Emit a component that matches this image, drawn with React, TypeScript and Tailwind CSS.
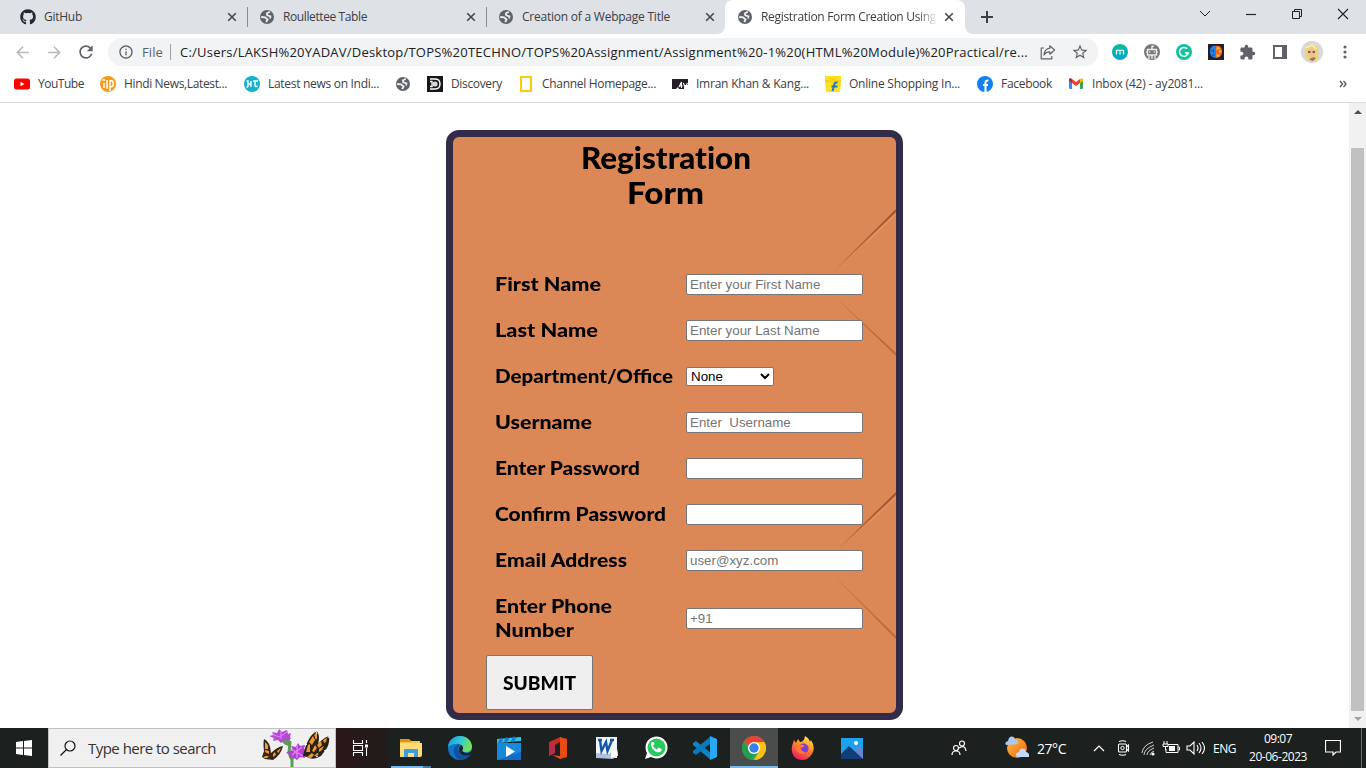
import { useLayoutEffect, useRef, useState } from "react";
import type { ReactNode } from "react";
import { FaGithub } from "react-icons/fa";
import { MdRefresh, MdStarBorder, MdInfoOutline, MdArrowBack, MdArrowForward, MdExtension } from "react-icons/md";

/* Single line of text that spans exactly w pixels, by tracking or by stretching its glyphs. */
function Fit({ w, className = "", stretch = false, children }: { w: number; className?: string; stretch?: boolean; children: string }) {
  const ref = useRef<HTMLSpanElement>(null);
  const [natural, setNatural] = useState(0);
  useLayoutEffect(() => {
    setNatural(ref.current!.offsetWidth === 0 ? w : ref.current!.getBoundingClientRect().width);
  }, [w, children]);
  const style = natural === 0
    ? {}
    : stretch
      ? { transform: `scaleX(${w / natural})` }
      : { letterSpacing: (w - natural) / children.length };
  return (
    <span className="block shrink-0 text-left" style={{ width: w }}>
      <span ref={ref} className={`inline-block origin-left whitespace-pre ${className}`} style={style}>
        {children}
      </span>
    </span>
  );
}

function Globe() {
  return (
    <svg viewBox="0 0 16 16" className="size-4 shrink-0">
      <circle cx="8" cy="8" r="7" fill="#5f6368" />
      <path d="M10.800 2.800 7.800 4.400l.4 2 3.300 1-.4 2.100" fill="none" stroke="#eceef1" strokeWidth="1.700" />
      <path d="m2.200 8 3.800.3 2.600 2.100-1.400 2.800" fill="none" stroke="#eceef1" strokeWidth="1.900" />
    </svg>
  );
}

function Close() {
  return (
    <svg viewBox="0 0 10 10" className="size-[10px] shrink-0">
      <path d="m1.200 1.200 7.600 7.600M8.800 1.200 1.200 8.800" stroke="#45494d" strokeWidth="1.600" />
    </svg>
  );
}

function Tab({ icon, label, w }: { icon: ReactNode; label: string; w: number }) {
  return (
    <div className="flex h-[34px] w-[239px] shrink-0 items-center">
      {icon}
      <div className="ml-2 flex-1">
        <Fit w={w}>{label}</Fit>
      </div>
      <Close />
      <div className="mr-[11px] ml-[10px] h-5 w-px bg-[#898c91]" />
    </div>
  );
}

function Mark({ icon, label, w }: { icon: ReactNode; label?: string; w?: number }) {
  return (
    <div className="mr-4 flex shrink-0 items-center gap-2">
      {icon}
      {label && w && <Fit w={w}>{label}</Fit>}
    </div>
  );
}

const small = "size-4 shrink-0";

function Browser() {
  return (
    <header className="text-[12px] text-[#3c4043]">
      <div className="flex h-[34px] bg-[#dee1e6] pl-5">
        <Tab icon={<FaGithub className="size-4 text-[#24292f]" />} label="GitHub" w={38} />
        <Tab icon={<Globe />} label="Roullettee Table" w={84} />
        <div className="flex h-[34px] w-[217px] shrink-0 items-center">
          <Globe />
          <div className="ml-2 flex-1"><Fit w={148}>Creation of a Webpage Title</Fit></div>
          <Close />
        </div>
        <div className="flex h-[34px] w-[10px] shrink-0 items-end">
          <svg viewBox="0 0 8 8" className="ml-[2px] size-2"><path d="M8 0v8H0a8 8 0 0 0 8-8Z" fill="white" /></svg>
        </div>
        <div className="flex h-[34px] w-[240px] shrink-0 items-center rounded-t-lg bg-white pl-3">
          <Globe />
          <div className="ml-2 w-[175px] overflow-hidden [mask-image:linear-gradient(to_right,black_156px,transparent_177px)]">
            <Fit w={175}>Registration Form Creation Using</Fit>
          </div>
          <div className="ml-2"><Close /></div>
        </div>
        <div className="flex h-[34px] items-end">
          <svg viewBox="0 0 8 8" className="size-2"><path d="M0 0v8h8a8 8 0 0 1-8-8Z" fill="white" /></svg>
        </div>
        <svg viewBox="0 0 14 14" className="mt-[10px] ml-[7px] size-[14px]"><path d="M7 1v12M1 7h12" stroke="#3c4043" strokeWidth="2" /></svg>
        <div className="flex flex-1 items-start justify-end pt-2 pr-[17px]">
          <svg viewBox="0 0 150 14" className="h-[14px] w-[150px] text-[#202124]" fill="none" stroke="currentColor">
            <path d="m1 3 5 5 5-5" />
            <path d="M47 6.500h10" strokeWidth="1.200" />
            <path d="M93.500 3.500h7v7h-7zM95.500 3.500v-2h7v7h-2" />
            <path d="m139 1 10 10M149 1l-10 10" strokeWidth="1.100" />
          </svg>
        </div>
      </div>

      <div className="flex h-8 items-center bg-white pt-1 pl-[13px] text-[14px]">
        <MdArrowBack className="size-[19px] text-[#b7b9bb]" />
        <MdArrowForward className="ml-[13px] size-[19px] text-[#b7b9bb]" />
        <MdRefresh className="ml-[12px] size-5 text-[#5f6368]" />
        <div className="ml-[12px] flex h-7 w-[990px] shrink-0 items-center rounded-full bg-[#f1f3f4] pl-[10px]">
          <MdInfoOutline className="size-4 text-[#5f6368]" />
          <div className="ml-2 text-[#5f6368]"><Fit w={21} className="text-[13px]">File</Fit></div>
          <div className="mr-[9px] ml-[7px] h-4 w-px bg-[#9aa0a6]" />
          <Fit w={848} className="text-[13px] text-[#202124]">C:/Users/LAKSH%20YADAV/Desktop/TOPS%20TECHNO/TOPS%20Assignment/Assignment%20-1%20(HTML%20Module)%20Practical/re...</Fit>
          <svg viewBox="0 0 16 16" className="ml-3 size-4 shrink-0" fill="none" stroke="#5f6368" strokeWidth="1.200">
            <path d="M4 4H1.200v10.800h10.600V12M9.800 1.800l4.800 4.200-4.800 4.200V7.800C7 7.700 5.200 8.800 4 11c.3-3.400 2-6.400 5.800-6.800Z" strokeLinejoin="round" />
          </svg>
          <MdStarBorder className="ml-[15px] size-[18px] shrink-0 text-[#5f6368]" />
        </div>
        <svg viewBox="0 0 16 16" className="ml-[14px] size-4 shrink-0">
          <defs><linearGradient id="teal" x2="0" y2="1"><stop stopColor="#08bb9c" /><stop offset="1" stopColor="#08a4cf" /></linearGradient></defs>
          <circle cx="8" cy="8" r="8" fill="url(#teal)" />
          <path d="M4.500 10.500V6.500q1.700-1 3.500 0v4M8 6.500q1.800-1 3.500 0v4" fill="none" stroke="white" strokeWidth="1.200" />
        </svg>
        <svg viewBox="0 0 16 16" className="ml-4 size-4 shrink-0">
          <circle cx="8" cy="8" r="8" fill="#767676" />
          <path d="M3.500 5.500h9v5.500h-9Z" fill="none" stroke="#eee" strokeWidth="1.400" />
          <path d="M8 5V2.200h2M8 11v4M5 8h1.500M9.500 8H11M2 8h1M13 8h1M5 12v3M11 12v3" stroke="white" strokeWidth="1.200" fill="none" />
        </svg>
        <svg viewBox="0 0 16 16" className="ml-4 size-4 shrink-0">
          <circle cx="8" cy="8" r="8" fill="#15c39a" />
          <path d="M11 4.700A4.400 4.400 0 1 0 12.200 9H9" fill="none" stroke="white" strokeWidth="1.500" />
          <path d="m12 7.700-.2 3.500-2-1.500Z" fill="white" />
        </svg>
        <svg viewBox="0 0 16 16" className="ml-4 size-4 shrink-0">
          <path d="M0 0h16v16H0z" fill="#24202b" />
          <path d="M8 2C4 1 2 4 2 7.500s2 6 6 6.500Z" fill="#1d84f0" />
          <path d="M8 2c4-1 6 2 6 5.500s-2 6-6 6.500Z" fill="#f0642b" />
          <path d="M8.500 4.500h3M11 7.500h2.500M8.500 11.500h3" stroke="#ffbf1e" strokeWidth="2" />
          <path d="M3.500 6.500h2v2M4 11h2.500" stroke="#1b3470" strokeWidth=".8" fill="none" />
        </svg>
        <MdExtension className="ml-[15px] size-[17px] shrink-0 text-[#5f6368]" />
        <svg viewBox="0 0 14 14" className="ml-[17px] size-[14px] shrink-0"><path d="M1 1h12v12H1z" fill="white" stroke="#5f6368" strokeWidth="2" /><path d="M9 1h4v12H9z" fill="#5f6368" /></svg>
        <svg viewBox="0 0 22 22" className="ml-[14px] size-[22px] shrink-0">
          <circle cx="11" cy="11" r="11" fill="#d8d8d8" />
          <path d="M5 16C3 8 6 3 11 4c6-1 7 5 6 13l-4 3-7-2Z" fill="#f1d36d" />
          <path d="M7 9q4-3 7 0v5l-3 3-3-2Z" fill="#eebf98" />
          <path d="M7 11h2.500M11.500 11H14" stroke="#4b4747" strokeWidth="1.300" />
          <path d="m5 7 6-3 4 4" fill="none" stroke="#fff0a7" strokeWidth="1.500" />
          <path d="M8 19q3-4 7-2l-3 3Z" fill="#aa725c" />
        </svg>
        <svg viewBox="0 0 4 14" className="ml-[20px] h-[14px] w-1 shrink-0" fill="#5f6368"><circle cx="2" cy="2" r="1.600" /><circle cx="2" cy="7" r="1.600" /><circle cx="2" cy="12" r="1.600" /></svg>
      </div>

      <div className="flex h-[37px] items-center border-b border-[#d9dbdd] bg-white pl-[14px]">
        <Mark icon={<svg viewBox="0 0 16 16" className={small}><rect y="2.500" width="16" height="11" rx="2.500" fill="red" /><path d="m6.500 5.700 4 2.300-4 2.300Z" fill="white" /></svg>} label="YouTube" w={46} />
        <Mark icon={<svg viewBox="0 0 16 16" className={small}><circle cx="8" cy="8" r="8" fill="#f59b17" /><path d="M4 7v5M2.500 4H5M7 13V4M10 15V4.700h1.500q1.800 0 1.800 3t-1.800 3H10" stroke="white" strokeWidth="1.500" fill="none" /></svg>} label="Hindi News,Latest..." w={103} />
        <Mark icon={<svg viewBox="0 0 16 16" className="ml-px size-4 shrink-0"><circle cx="8" cy="8" r="8" fill="#13b1ce" /><path d="M2.500 5h1.500v6M7 5v6M4 8h3M9 5h5M11 5v5q1.500 1.500 2.500-.5M2.500 11H4" stroke="white" strokeWidth="1.400" fill="none" /></svg>} label="Latest news on Indi..." w={111} />
        <Mark icon={<Globe />} />
        <Mark icon={<svg viewBox="0 0 16 16" className={small}><path d="M0 0h16v16H0z" fill="#15171a" /><path d="M3 3h5q5 0 5 5t-5 5H3" fill="none" stroke="white" strokeWidth="1.400" /><circle cx="8" cy="8" r="2.600" fill="#d8d8d8" /><path d="M3 5.500h2v5H3" fill="none" stroke="white" strokeWidth="1.300" /></svg>} label="Discovery" w={51} />
        <Mark icon={<svg viewBox="0 0 16 16" className={small}><path d="M3 1h10v14H3z" fill="none" stroke="#fecb0a" strokeWidth="2" /></svg>} label="Channel Homepage..." w={114} />
        <Mark icon={<svg viewBox="0 0 16 16" className={small}><path d="M0 3h16v6h-4v4H7l-1-2-2 2H0Z" fill="#242025" /><path d="m7 11 2.500-5v6M8 10h2.500M11.500 7l1.500 5 2.500-5" stroke="white" strokeWidth="1.100" fill="none" /></svg>} label="Imran Khan & Kang..." w={113} />
        <Mark icon={<svg viewBox="0 0 16 16" className={small}><path d="M0 0h16v5l-1 11H1L0 5Z" fill="#ffe11b" /><path d="M0 5h16M5 2q3 3 6 0" stroke="#f8bd08" fill="none" /><path d="M12.500 6.500H11q-1.500 0-2 3.500l-1.500 5M6.500 10.500h6" fill="none" stroke="#2874c7" strokeWidth="2" /></svg>} label="Online Shopping In..." w={111} />
        <Mark icon={<svg viewBox="0 0 16 16" className="ml-px size-4 shrink-0"><circle cx="8" cy="8" r="8" fill="#1180f4" /><path d="M8.500 16V7q0-3 3-2.500M6 9h5" fill="none" stroke="white" strokeWidth="2.100" /></svg>} label="Facebook" w={51} />
        <Mark icon={<svg viewBox="0 0 16 16" className={small}><path d="M1 3h3v10H2q-1 0-1-1Z" fill="#4285f4" /><path d="M12 3h3v9q0 1-1 1h-2Z" fill="#34a853" /><path d="M1 4q0-3 3-1l4 3 4-3v4l-4 3-4-3Z" fill="#ea4335" /><path d="M1 4q0-3 3-1v4L1 5Z" fill="#b92b32" /><path d="M15 4q0-3-3-1v4l3-2Z" fill="#fbbc04" /></svg>} label="Inbox (42) - ay2081..." w={111} />
        <svg viewBox="0 0 8 8" className="mr-[19px] ml-auto size-2"><path d="m1 1 2.500 3L1 7M4.500 1 7 4 4.500 7" fill="none" stroke="#505458" strokeWidth="1.300" /></svg>
      </div>
    </header>
  );
}

const fieldClass = "block h-[21px] w-[177px] rounded-[2px] border border-[#767676] bg-white px-[3px] py-px font-['Liberation_Sans',sans-serif] text-[13.333px] leading-normal font-normal placeholder:text-[#757575]";

function Row({ label, w, children }: { label: string; w: number; children: ReactNode }) {
  return (
    <div className="flex h-[46px] items-center">
      <div className="w-[191px]"><Fit stretch w={w}>{label}</Fit></div>
      {children}
    </div>
  );
}

function Registration() {
  return (
    <main className="flex h-[625px] bg-white">
      <div className="w-[1349px] pt-[27px] pl-[446px]">
        <form className="relative h-[590px] w-[457px] rounded-[13px] border-[7px] border-[#332c48] bg-[#dc8856] font-['Lato',sans-serif] text-[19px] leading-6 font-black text-black">
          <svg viewBox="0 0 443 576" className="absolute inset-0 h-[576px] w-[443px]">
            <path d="M381 134 443 72v3Z" fill="#a45332" /><path d="m413 106 30-29" stroke="#eba077" strokeWidth=".8" />
            <path d="m381 159 62 60v-3Z" fill="#bd6841" />
            <path d="m384 413 59-58v3Z" fill="#a45332" /><path d="m415 387 28-27" stroke="#eba077" strokeWidth=".8" />
            <path d="m381 439 62 63v-3Z" fill="#bd6841" />
          </svg>
          <div className="relative pl-[42px]">
            <h1 className="flex w-[341px] flex-col items-center pt-[3px] text-[30px] leading-[35px] [font-variant-ligatures:none]">
              <Fit stretch w={170}>Registration</Fit>
              <Fit stretch w={77}>Form</Fit>
            </h1>
            <div className="mt-[51px]">
              <Row label="First Name" w={106}><input className={fieldClass} placeholder="Enter your First Name" /></Row>
              <Row label="Last Name" w={103}><input className={fieldClass} placeholder="Enter your Last Name" /></Row>
              <Row label="Department/Office" w={178}>
                <div className="flex h-[19px] w-[88px] items-center justify-between rounded-[2px] border border-[#767676] bg-white pr-[3px] pl-1 font-['Liberation_Sans',sans-serif] text-[13.333px] font-normal">
                  <span className="pt-px">None</span>
                  <svg viewBox="0 0 10 7" className="h-[7px] w-[10px]"><path d="m1 1 4 4 4-4" fill="none" stroke="black" strokeWidth="2" /></svg>
                </div>
              </Row>
              <Row label="Username" w={97}><input className={fieldClass} placeholder="Enter  Username" /></Row>
              <Row label="Enter Password" w={145}><input className={fieldClass} /></Row>
              <Row label="Confirm Password" w={171}><input className={fieldClass} /></Row>
              <Row label="Email Address" w={132}><input className={fieldClass} placeholder="user@xyz.com" /></Row>
              <div className="flex h-[70px] items-center">
                <div className="w-[191px]"><Fit stretch w={117}>Enter Phone</Fit><Fit stretch w={79}>Number</Fit></div>
                <input className={fieldClass} placeholder="+91" />
              </div>
            </div>
            <button type="button" className="-ml-[9px] mt-[2px] flex h-[55px] w-[107px] items-center justify-center rounded-[2px] border border-[#767676] bg-[#efefef] text-[18px]">
              <Fit stretch w={73}>SUBMIT</Fit>
            </button>
          </div>
        </form>
      </div>
      <div className="flex w-[17px] flex-col items-center bg-[#f1f1f1]">
        <svg viewBox="0 0 8 4" className="mt-[7px] h-1 w-2"><path d="m4 0 4 4H0Z" fill="#505050" /></svg>
        <div className="mt-[34px] h-[563px] w-[13px] bg-[#c1c1c1]" />
        <svg viewBox="0 0 8 4" className="mt-[6px] h-1 w-2"><path d="M0 0h8L4 4Z" fill="#a3a3a3" /></svg>
      </div>
    </main>
  );
}

function Butterflies() {
  return (
    <svg viewBox="0 0 70 38" className="h-[38px] w-[70px]">
      <path d="M31 38V31l-3-7 1-12M31 30l5-6" fill="none" stroke="#5e9b52" strokeWidth="3" />
      <path d="m19 10 10-2v10l-6-3Z" fill="#61975d" />
      <path d="m8 7 5-1-2-3 5 1 2-4 3 3 5-2 1 4 3-1-1 4 1 2-6 1-4 3-3-3-5 1 1-3Z" fill="#b44bd5" />
      <path d="m11 5 7 3 8-5M20 2v8" stroke="#e08af5" fill="none" />
      <path d="m28 22 4-1-2-4 5 1 2-4 2 3 5-1-1 4 3 2-3 3 1 4-5-1-3 3-4-3-4 1 1-4-4-1Z" fill="#b33ed0" />
      <path d="m30 20 12 7M31 26l10-8M36 16v13" stroke="#df87f3" strokeWidth="1.300" />
      <path d="M42 27q2-9 4-13 3-7 7-10 3-3 4 0 2 5 0 11 5-6 11-8 1 6-2 12l-6 8q-8 5-14 1Z" fill="#2b211c" />
      <path d="m45 23 2-7 2-1v8Zm3-10 4-6 2 4-3 5Zm5-7 3-3v6l-1 2ZM51 22l3-6 2 3-3 4Zm5-6 4-4 1 4-3 3Zm6-5 4-2-1 4-2 1Zm-4 9 5-3-2 4-3 2Zm-12 8 5-4 2 2-3 3Zm7-1 3-3 2 1-3 2Z" fill="#f09a24" />
      <path d="m55 3 1 2m11 4 1-2m-5 15 2-1m-10 7 2-1M45 15l1 1" stroke="#fff" strokeWidth="1" />
      <path d="M3 10q6 2 7 14 6-6 12-7-2 9-10 14l-8-1-3-2 2-6q-1-8 0-12Z" fill="#37251b" />
      <path d="m4 13 3 3v4H4Zm0 8 4 1v3l-4-2Zm8 4 2-2 1 3-3 2Zm4-3 4-3-2 4-1 1Zm-12 5 4 0-2 2H2Z" fill="#f19a2a" />
    </svg>
  );
}

function TaskButton({ children, active = false, open = false }: { children: ReactNode; active?: boolean; open?: boolean }) {
  return (
    <div className={`flex h-10 w-12 shrink-0 flex-col items-center ${active ? "bg-[#4b4d4c]" : ""}`}>
      <div className="flex h-[38px] items-center pt-[2px]">{children}</div>
      {active && <div className="h-[2px] w-12 bg-[#76b9ed]" />}
      {open && <div className="flex h-[2px] w-10"><div className="w-8 bg-[#76b9ed]" /><div className="flex-1 bg-[#4e7899]" /></div>}
    </div>
  );
}

const big = "size-6 shrink-0";

function Taskbar() {
  return (
    <footer className="flex h-10 bg-[#1c201e] text-white">
      <div className="flex w-12 shrink-0 items-center justify-center">
        <svg viewBox="0 0 16 16" className="size-4" fill="white"><path d="m0 2 7-1v6.500H0ZM8 1l8-1v7.500H8ZM0 8.500h7V15l-7-1ZM8 8.500h8V16l-8-1Z" /></svg>
      </div>
      <div className="flex w-[288px] shrink-0 items-center border border-[#c2c2c2] bg-[#f0f0f0] pl-[11px]">
        <svg viewBox="0 0 16 16" className="size-4"><circle cx="10" cy="6" r="5" fill="none" stroke="#111" strokeWidth="1.200" /><path d="m6.500 9.500-6 6" stroke="#111" strokeWidth="1.200" /></svg>
        <div className="ml-3"><Fit w={128} className="text-[15px] text-[#343434]">Type here to search</Fit></div>
        <div className="ml-[45px]"><Butterflies /></div>
      </div>
      <div className="flex w-[51px] shrink-0 items-center bg-linear-to-r from-[#2a1719] to-[#211c1b] pl-4">
        <svg viewBox="0 0 17 16" className="h-4 w-[17px]" fill="none" stroke="white" strokeWidth="1.100"><path d="M1.500 0v3.500h9V0M1.500 16v-3.500h9V16M1.500 5.500h9v5h-9ZM14.500 0v3M14.500 8v8" /><path d="M13 4.500h3v3h-3z" fill="white" stroke="none" /></svg>
      </div>
      <div className="flex gap-px">
        <TaskButton open><svg viewBox="0 0 24 24" className={big}><path d="M1 3h9l2 2h9v16H1Z" fill="#f9c34a" /><path d="M1 3h9l2 3H1Z" fill="#df9410" /><path d="M1 7h22v12q0 2-2 2H1Z" fill="#ffdd76" /><path d="M5 21v-7q0-1 1-1h12q1 0 1 1v7h-4v-4H9v4Z" fill="#3c9ede" /></svg></TaskButton>
        <TaskButton><svg viewBox="0 0 24 24" className={big}>
          <defs><linearGradient id="edge" x2="1" y2=".3"><stop stopColor="#1697df" /><stop offset=".55" stopColor="#34c7d4" /><stop offset="1" stopColor="#73e258" /></linearGradient></defs>
          <circle cx="12" cy="12" r="12" fill="#1176c9" />
          <path d="M0 11C1-3 22-4 24 10c0 7-7 7-10 5 3-5-2-8-6-7C4 8 1 10 0 11Z" fill="url(#edge)" />
          <path d="M11 8c-8 3-6 13 1 16 5 0 9-3 11-6-6 2-13 0-13-6 0-2 2-2 1-4Z" fill="#11519e" /><path d="M13 9c3 2 2 4 1 6 3 3 8 3 10-1v4c-6 3-13 1-13-5 0-2 1-3 2-4Z" fill="#1c201e" />
        </svg></TaskButton>
        <TaskButton><svg viewBox="0 0 24 24" className={big}><path d="M0 7h24v17H0Z" fill="#146bca" /><path d="M0 7h24v9L0 24Z" fill="#1689db" /><path d="M0 3 24 1v4L0 7Z" fill="#30c4f0" /><path d="m5 3-3 4m9-5L8 6m10-5-3 5" stroke="#1181d0" strokeWidth="3" /><path d="M9 10v11l9-5.500Z" fill="white" /></svg></TaskButton>
        <TaskButton><svg viewBox="0 0 24 24" className={big}><path d="m3 6 11-5v5l-5 3v8l-6 3Z" fill="#c42d22" /><path d="m14 1 7 2v18l-7 2-8-4 8 1Z" fill="#e84a13" /><path d="m3 20 6-3V9L3 8Z" fill="#b92b48" /></svg></TaskButton>
        <TaskButton><svg viewBox="0 0 24 24" className={big}><path d="M1 1h21v21H1Z" fill="#eff3fb" /><path d="M1 22v-5l13 1 8-5 1 6-5 4Z" fill="#b1bfe0" /><path d="m5 4 1.500 11L11 6l1.500 9L17 4M3 4h4m8 0h4" fill="none" stroke="#1556a9" strokeWidth="2.400" /><path d="m16 15 6-2 1 7-7 2Z" fill="white" /></svg></TaskButton>
        <TaskButton><svg viewBox="0 0 24 24" className={big}><path d="M1 23 3 17A11 11 0 1 1 7 21Z" fill="#fff" /><circle cx="12.500" cy="11.500" r="9" fill="#27c95c" /><path d="M8 6q-2 2-.5 5c2 4 5 6 8 5 2-.5 2.500-2 2-3l-3-1.500-1.500 2q-3-1-4-4L10.500 8 9.500 6Z" fill="white" /></svg></TaskButton>
        <TaskButton><svg viewBox="0 0 24 24" className={big}><path d="m0 7 3-2 15 12v7L0 9Z" fill="#1383c8" /><path d="m0 17 3 2L18 7V0L0 15Z" fill="#087bbb" /><path d="m17 0 7 3v18l-7 3Z" fill="#27a8f2" /></svg></TaskButton>
        <TaskButton active><svg viewBox="0 0 24 24" className={big}><circle cx="12" cy="12" r="12" fill="#34a853" /><path d="M12 12 1.600 6A12 12 0 0 1 22.400 6Z" fill="#ea4335" /><path d="M22.400 6A12 12 0 0 1 12 24l5-9-3-9Z" fill="#fbc116" /><path d="M1.600 6 7 15l5 3-2 6A12 12 0 0 1 1.600 6Z" fill="#239c4f" /><circle cx="12" cy="12" r="6" fill="white" /><circle cx="12" cy="12" r="4.700" fill="#367ee9" /></svg></TaskButton>
        <TaskButton><svg viewBox="0 0 24 24" className={big}>
          <defs><linearGradient id="fire" x1=".8" y1="0" x2=".3" y2="1"><stop stopColor="#fff14f" /><stop offset=".45" stopColor="#ff8b25" /><stop offset="1" stopColor="#ee1765" /></linearGradient></defs>
          <path d="m3 4 2 3 2-4 2 3q4 0 5-6 4 2 5 6l1-2q5 8 1 14-4 6-10 6Q3 24 1 16C0 10 2 8 3 4Z" fill="url(#fire)" /><circle cx="12.500" cy="12.500" r="5" fill="#7b3bd9" /><path d="M6 10q4-3 8 0l-4 2q0 4 5 4-4 4-8 0-3-3-1-6Z" fill="#ff7932" />
        </svg></TaskButton>
        <TaskButton><svg viewBox="0 0 24 24" className={big}><path d="M1 2h22v21H1Z" fill="#20a1ed" /><path d="m13 16 6-6 4 4v9H13Z" fill="#6686d1" /><path d="m1 18 8-8 14 13H1Z" fill="#113d79" /><circle cx="16" cy="7" r="2" fill="white" /></svg></TaskButton>
      </div>
      <svg viewBox="0 0 16 16" className="mt-3 ml-[75px] size-4 shrink-0" fill="none" stroke="white" strokeWidth="1.200"><circle cx="5" cy="8" r="2.500" /><path d="M1 15q0-4 4-4t4 4" /><circle cx="11" cy="3.500" r="2.500" /><path d="M8 8q6-4 7 3" /></svg>
      <svg viewBox="0 0 24 24" className="mt-2 ml-[38px] size-6 shrink-0"><defs><linearGradient id="sun" x2="1" y2="1"><stop stopColor="#ffbd3a" /><stop offset="1" stopColor="#ec6415" /></linearGradient></defs><circle cx="12" cy="12" r="10" fill="url(#sun)" /><path d="M1 9q-2-3 2-4 1-6 6-4l1 3q4 0 3 4Z" fill="#a8c9f5" /><path d="M12 21q-3-4 2-5 1-5 6-3l1 3q4 1 3 5Z" fill="#c4dafa" /></svg>
      <div className="mt-[10px] ml-2 leading-5"><Fit w={29} className="text-[14px]">27°C</Fit></div>
      <svg viewBox="0 0 112 16" className="mt-3 ml-[27px] h-4 w-[112px] shrink-0" fill="none" stroke="white" strokeWidth="1.200">
        <path d="m1 11 5-5 5 5" />
        <path d="M26.500 4h6q1 0 1 1v6q0 1-1 1h-6q-1 0-1-1V5q0-1 1-1Zm7 3 2-2v6l-2-2M26 1.500q4-1.500 7 0M26 14.500q4 1.500 7 0" strokeWidth="1.100" />
        <circle cx="29.500" cy="8" r="1.700" strokeWidth="1" />
        <path d="M51 15q0-6 10-10M54 15q0-4 7-7M57 15q1-3 4-4M49 13Q50 5 60 2" opacity=".8" strokeWidth="1" /><circle cx="60" cy="14" r="1" fill="white" />
        <path d="M75 4.500h10v8H73V9M85.500 7h1v3h-1M71 1v3M74 1v3M70 4h5v2.500h-5zM72.500 7v3" strokeWidth="1" /><path d="M76 6h6v5h-6Z" fill="white" stroke="none" />
        <path d="M94 6h3l4-4v12l-4-4h-3ZM104 5q2 3 0 6M106 3q4 5 0 10M109 2q5 6 0 12" strokeWidth="1.100" />
      </svg>
      <div className="mt-[9px] ml-2 leading-5"><Fit w={23} className="text-[12px]">ENG</Fit></div>
      <div className="mt-[2px] ml-[13px] flex shrink-0 flex-col items-center text-[12px] leading-[18px]">
        <Fit w={28}>09:07</Fit>
        <Fit w={58}>20-06-2023</Fit>
      </div>
      <svg viewBox="0 0 16 16" className="mt-3 ml-[18px] size-4 shrink-0"><path d="M.5.500h15v11.500H11l-3 3v-3H.5Z" fill="none" stroke="white" strokeWidth="1.200" /></svg>
      <div className="mr-1 ml-auto h-10 w-px bg-[#6b6e6c]" />
    </footer>
  );
}

export default function App() {
  return (
    <div className="flex h-[768px] w-[1366px] flex-col overflow-hidden bg-white font-['Open_Sans','Noto_Sans',sans-serif]">
      <Browser />
      <Registration />
      <Taskbar />
    </div>
  );
}
